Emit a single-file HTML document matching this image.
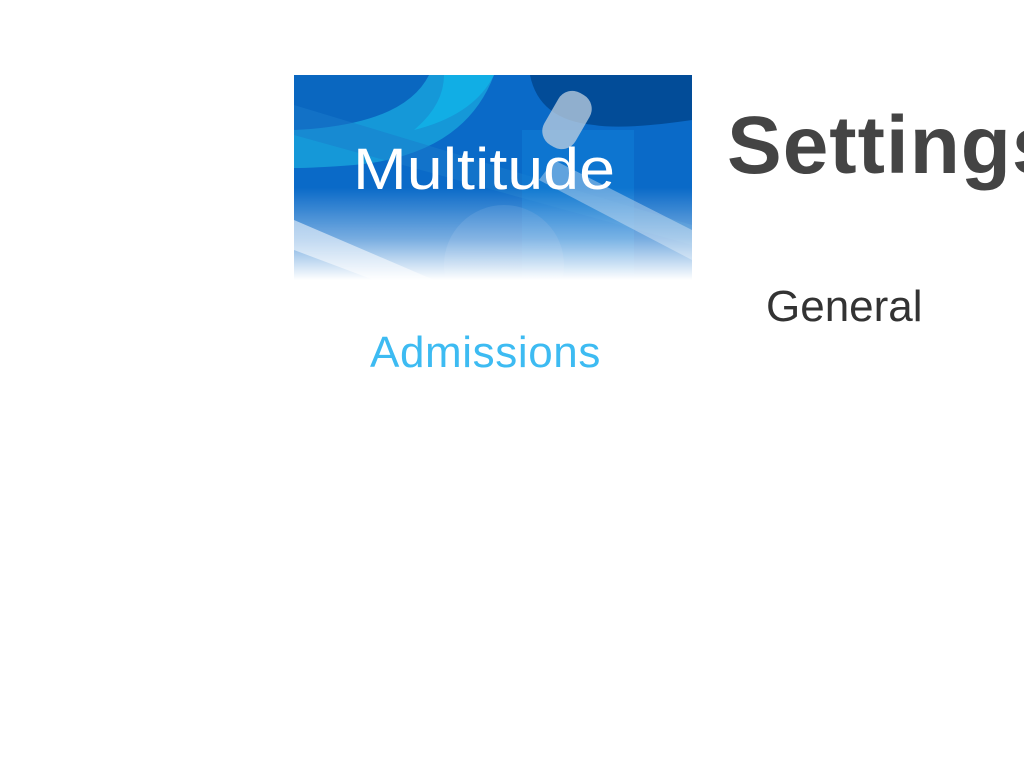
<!DOCTYPE html>
<html><head><meta charset="utf-8"><style>
html,body{margin:0;padding:0;width:1024px;height:768px;overflow:hidden;background:#fff;font-family:"Liberation Sans","DejaVu Sans",sans-serif;}
#w{position:absolute;left:0;top:0;width:1024px;height:768px;overflow:hidden;}
.t{position:absolute;white-space:nowrap;line-height:1;}
</style></head><body><div id="w">
<svg style="position:absolute;left:294px;top:75px" width="398" height="205" viewBox="0 0 398 205">
<defs>
<linearGradient id="fade" x1="0" y1="0" x2="0" y2="1">
<stop offset="0" stop-color="#fff" stop-opacity="0"/>
<stop offset="0.55" stop-color="#fff" stop-opacity="0"/>
<stop offset="0.8" stop-color="#fff" stop-opacity="0.45"/>
<stop offset="1" stop-color="#fff" stop-opacity="1"/>
</linearGradient>
</defs>
<rect width="398" height="205" fill="#0a6ac8"/>
<path d="M236 0 H398 V45 Q330 55 300 50 Q245 45 236 0Z" fill="#024c98"/>
<path d="M0 0 H200 Q170 80 60 90 Q20 93 0 93Z" fill="#1598d8"/>
<path d="M0 0 H135 Q110 50 0 55Z" fill="#0a67c0"/>
<path d="M90 0 H200 Q180 40 120 55 Q150 30 150 0Z" fill="#10b4e8" opacity="0.8"/>
<path d="M0 30 L398 150 V170 L0 60Z" fill="#1a7ccc" opacity="0.5"/>
<rect x="228" y="55" width="112" height="150" fill="#1080d8" opacity="0.5"/>
<rect x="255" y="15" width="36" height="60" rx="16" transform="rotate(30 273 45)" fill="#c0d0e0" opacity="0.75"/>
<path d="M245 105 L260 85 L398 155 V185Z" fill="#c6dcef" opacity="0.45"/>
<circle cx="210" cy="190" r="60" fill="#4a8ed8" opacity="0.35"/>
<path d="M0 145 L140 205 H80 L0 175Z" fill="#e6f0fa" opacity="0.6"/>
<rect width="398" height="205" fill="url(#fade)"/>
<text x="190" y="114" text-anchor="middle" font-family="Liberation Sans, sans-serif" font-size="58" fill="#fff" textLength="262" lengthAdjust="spacingAndGlyphs">Multitude</text>
</svg>
<div class="t" style="left:727px;top:105px;font-size:82px;font-weight:bold;color:#444;letter-spacing:1px;">Settings</div>
<div class="t" style="left:766px;top:285px;font-size:44px;color:#333;">General</div>
<div class="t" style="left:370px;top:331px;font-size:44px;color:#3dbbf2;letter-spacing:0.6px;">Admissions</div>
</div></body></html>
